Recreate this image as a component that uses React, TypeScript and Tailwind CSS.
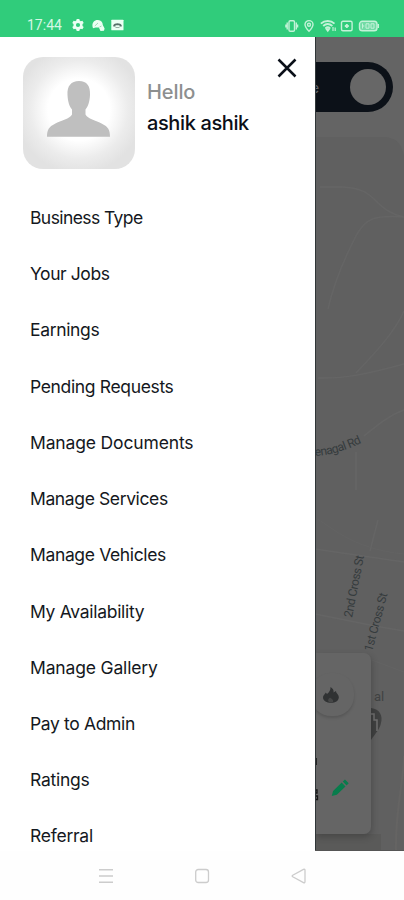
import React from "react";

const items = [
  { label: "Business Type", cls: "tracking-[-0.58px]" },
  { label: "Your Jobs", cls: "tracking-[-0.42px]" },
  { label: "Earnings", cls: "tracking-[-0.35px]" },
  { label: "Pending Requests", cls: "tracking-[-0.35px]" },
  { label: "Manage Documents", cls: "tracking-[-0.15px]" },
  { label: "Manage Services", cls: "tracking-[-0.38px]" },
  { label: "Manage Vehicles", cls: "tracking-[-0.36px]" },
  { label: "My Availability", cls: "tracking-[-0.3px]" },
  { label: "Manage Gallery", cls: "tracking-[-0.16px]" },
  { label: "Pay to Admin", cls: "tracking-[-0.35px]" },
  { label: "Ratings", cls: "tracking-[-0.25px]" },
  { label: "Referral", cls: "tracking-[-0.25px]" },
];

function StatusBar() {
  return (
    <header className="flex h-[37px] shrink-0 items-end justify-between bg-[#30cc7b] pr-[21px] pb-[4px] pl-[27px] text-[#c3f2d8]">
      <div className="flex items-center">
        <span className="w-[35px] font-['Roboto',sans-serif] text-[14px] leading-[16px] whitespace-nowrap text-[#d5f7e4]">17:44</span>
        <svg className="ml-[10px]" width="12" height="14" viewBox="0 0 12 14">
          <path d="M4.700 1h2.600l.4 1.600 1.100.6 1.600-.5 1.300 2.200-1.200 1.200v1.800l1.200 1.200-1.300 2.200-1.600-.5-1.100.6L7.300 13H4.700l-.4-1.600-1.100-.6-1.600.5L.3 9.100l1.200-1.200V6.100L.3 4.900l1.300-2.200 1.600.5 1.100-.6zM6 4.900a2.100 2.100 0 100 4.200 2.100 2.100 0 000-4.200z" fill="#eafff3" fillRule="evenodd" />
        </svg>
        <svg className="ml-[8px]" width="13" height="13" viewBox="0 0 13 13">
          <path d="M.5 7.500C0 3.500 2.500.8 6 1c3 .1 4.700 2 4.800 5l1.800 3.400-.6 2.300-3.500.3-1.600-3.500H3.600L1 9.200z" fill="#eafff3" />
          <path d="M2.800 7 6 4M7.500 8l2-1" stroke="#8bcfa8" strokeWidth=".8" />
        </svg>
        <svg className="ml-[6px]" width="13" height="12" viewBox="0 0 13 12">
          <rect x=".3" y=".7" width="12.200" height="10.600" rx=".6" fill="#eafff3" />
          <path d="M2.300 7.500V6.300C3 3.400 10 3.400 10.700 6.300v1.200H8.500V6.200h-4v1.300z" fill="#556f68" />
          <path d="M4.500 8.500h4" stroke="#829b90" strokeWidth=".8" />
        </svg>
      </div>
      <svg width="98" height="14" viewBox="0 0 98 14" fill="none" stroke="currentColor" strokeWidth="1.400">
        <rect x="4" y="1.700" width="5.500" height="10.600" rx="1.300" />
        <path d="M2.200 3.500v7M11.300 3.500v7M.9 5.500v3M12.600 5.500v3" />
        <path d="M24 1.600a4 4 0 00-4 4c0 2.700 4 6.700 4 6.700s4-4 4-6.700a4 4 0 00-4-4z" />
        <circle cx="24" cy="5.700" r="1.500" />
        <path d="M35.900 4.600c3.700-3.500 9.900-3.500 13.600 0M38.200 7c2.600-2.400 6.200-2.400 9.200 0M40.500 9.200c1.400-1.100 3.200-1.100 4.600 0" strokeWidth="1.900" />
        <path d="m41.300 10 1.500 2 1.500-2z" fill="currentColor" />
        <path d="M48 8v4M50.200 8.500v3.500" strokeWidth="1.200" />
        <rect x="56.500" y="2.300" width="10.600" height="9.400" rx="1.500" />
        <path d="M61.800 5v4M59.800 7h4" strokeWidth="1.900" />
        <rect x="74.500" y="2.300" width="17.500" height="9.400" rx="2.800" fill="#72dba6" />
        <path d="M93.300 5v4" strokeWidth="1.500" />
        <path d="M77.500 4.500v5m0-2.500h1.800M81 4.800h3v4.400h-3zM86 4.800h3v4.400h-3z" strokeWidth="1" />
      </svg>
    </header>
  );
}

function Avatar() {
  return (
    <div className="flex size-[112px] shrink-0 justify-center overflow-hidden rounded-[20px] bg-[radial-gradient(circle_at_50%_47%,#ffffff_0%,#ffffff_38%,#ececec_60%,#e2e2e2_78%)]">
      <svg width="112" height="112" viewBox="0 0 112 112" fill="#bfbfbf">
        <path d="M56 24C48 24 44 29 44.500 38c.3 7 2 11.500 4.500 14.500v5c-2 4-11 6.200-17 9.200-6.200 3-8 6.200-8 13h63c0-6.800-1.800-10-8-13-6-3-14.500-5.200-16.500-9.200v-5C65 49.500 66.700 45 67 38c.4-9-3-14-11-14z" />
      </svg>
    </div>
  );
}

function Drawer() {
  return (
    <aside className="flex w-[315px] shrink-0 flex-col bg-white">
      <div className="flex pt-[20px] pl-[23px]">
        <Avatar />
        <div className="flex w-[130px] flex-col pt-[20px] pl-[12px] text-[20px] whitespace-nowrap">
          <span className="leading-[31px] font-medium tracking-[-0.1px] text-[#8d8f8f]">Hello</span>
          <span className="leading-[31px] font-medium tracking-[-0.38px] text-[#0b0f18]">ashik ashik</span>
        </div>
        <svg className="mt-[1px] ml-[12px]" width="20" height="20" viewBox="0 0 20 20" stroke="#0b1019" strokeWidth="2.500">
          <path d="M1.500 1.500 18.500 18.500M18.500 1.500 1.500 18.500" />
        </svg>
      </div>
      <nav className="flex flex-col pt-[21px] pl-[30px] text-[17.500px] text-[#141821]">
        {items.map((item) => (
          <a key={item.label} className="flex h-[56.230px] items-center whitespace-nowrap">
            <span className={item.cls}>{item.label}</span>
          </a>
        ))}
      </nav>
    </aside>
  );
}

function MapPane() {
  return (
    <main className="relative w-[89px] shrink-0 overflow-hidden border-b border-[#555] bg-[#606060]">
      <svg width="89" height="814" viewBox="315 37 89 814" fill="none">
        <path d="M315 36h89v120c-3-14-8-18-20-19h-69z" fill="#646464" />
        <g stroke="#656565" strokeWidth="1.500">
          <path d="M320 187h22c18 1 25 5 33 13s15 14 29 17M404 217c-31-2-38 2-47 17-12 23-23 48-29 75M318 378c25 1 50-4 86-14M404 311c-9 20-26 39-48 62M404 410c-14 5-25 14-40 26M315 549l89 13M378 520l-8 31M356 452v38M315 614l60 12 29 5" />
        </g>
        <path d="M315 518c14 6 35 31 89 36M372 660l32 12v178" stroke="#636363" />
        <path d="M396 850c-1-40 8-70 8-94" stroke="#656463" strokeWidth="2" />
        <path id="road-label" d="M315 456c20-1 34-7 66-22" />
        <g fill="#353b3d" fontFamily="Roboto, sans-serif" fontSize="12">
          <text textLength="49"><textPath href="#road-label">enagal Rd</textPath></text>
          <text transform="translate(352 618) rotate(-79)" textLength="63">2nd Cross St</text>
          <text transform="translate(372 652) rotate(-75)" textLength="60">1st Cross St</text>
          <text x="374" y="701" fontSize="13" fill="#414343">al</text>
        </g>
        <path d="M371 708c9 1 12 8 10 15-1 6-6 11-10 17z" fill="#404141" />
        <path d="M371 714h3v6h3v11" stroke="#707070" strokeWidth="1.500" />
        <path d="M315 834h66v17h-66z" fill="#5a5a59" />
      </svg>
      <div className="absolute top-[25px] left-0 flex h-[50px] w-[78px] items-center justify-between rounded-r-full bg-[#0c1118] pr-[7px] text-[14px] text-[#61656b]">
        <span className="-ml-[4px]">e</span>
        <span className="size-[36px] rounded-full bg-[#676767]" />
      </div>
      <section className="absolute top-[616px] left-0 flex h-[181px] w-[56px] flex-col overflow-hidden rounded-r-[7px] bg-[#656565] shadow-[1px_3px_7px_rgba(0,0,0,0.22)]">
        <div className="mt-[20px] -ml-[4px] flex h-[43px] w-[43px] items-center justify-center rounded-[20px] bg-[#656565] shadow-[0_2px_3px_rgba(0,0,0,0.14)]">
          <svg className="-ml-[4px]" width="18" height="18" viewBox="0 0 18 18" fill="#303233">
            <path d="M8.500 1c2.500 1.500 3.500 3.500 3 5.500L14 5c0 2.500 3 3.500 2.800 6.500-.3 3.500-3.300 5.300-7.800 5.300S1.500 15 1 12C.7 9.500 3 8.500 3.800 6.500L5 8c2-1.500 3.800-4 3.500-7z" />
            <path d="M7 16c-2-2 0-3.500 1-4.500 1 1 4 2 3 4.500z" fill="#464747" />
          </svg>
        </div>
        <svg className="mt-[38px]" width="56" height="62" viewBox="0 0 56 62">
          <path d="M1 4v7" stroke="#111" strokeWidth="1.500" />
          <path d="M0 36h2v3H0M0 42h2.500v3.500H0" fill="none" stroke="#151515" strokeWidth="1.300" />
          <g transform="translate(25 34) rotate(-44)" fill="#087c4c">
            <path d="M-11.500 0-7-2.700H5v5.400H-7zM6.500-2.700h3v5.400h-3z" />
          </g>
        </svg>
      </section>
      <div className="absolute inset-y-0 left-0 w-px bg-[#303638]" />
    </main>
  );
}

function NavigationBar() {
  return (
    <footer className="flex h-[49px] items-center justify-center gap-[80.500px] bg-[#fefefe] pt-[1px] text-[#cccccc]">
      <svg width="16" height="16" viewBox="0 0 16 16" stroke="currentColor" strokeWidth="1.500">
        <path d="M1 1.800h14M1 8h14M1 14.200h14" />
      </svg>
      <svg width="16" height="16" viewBox="0 0 16 16" fill="none" stroke="currentColor" strokeWidth="1.300">
        <rect x="1.700" y="1.500" width="12.800" height="13" rx="2.500" />
      </svg>
      <svg width="16" height="16" viewBox="0 0 16 16" fill="none" stroke="currentColor" strokeWidth="1.300" strokeLinejoin="round">
        <path d="M1.700 7.200 12.500 1.400q1.500-.6 1.500 1v11.200q0 1.600-1.500 1L1.700 8.800q-1-.8 0-1.600z" />
      </svg>
    </footer>
  );
}

export default function App() {
  return (
    <div className="flex h-[900px] w-[404px] flex-col overflow-hidden bg-white font-['Inter',sans-serif]">
      <StatusBar />
      <div className="flex h-[814px] shrink-0 overflow-hidden">
        <Drawer />
        <MapPane />
      </div>
      <NavigationBar />
    </div>
  );
}
